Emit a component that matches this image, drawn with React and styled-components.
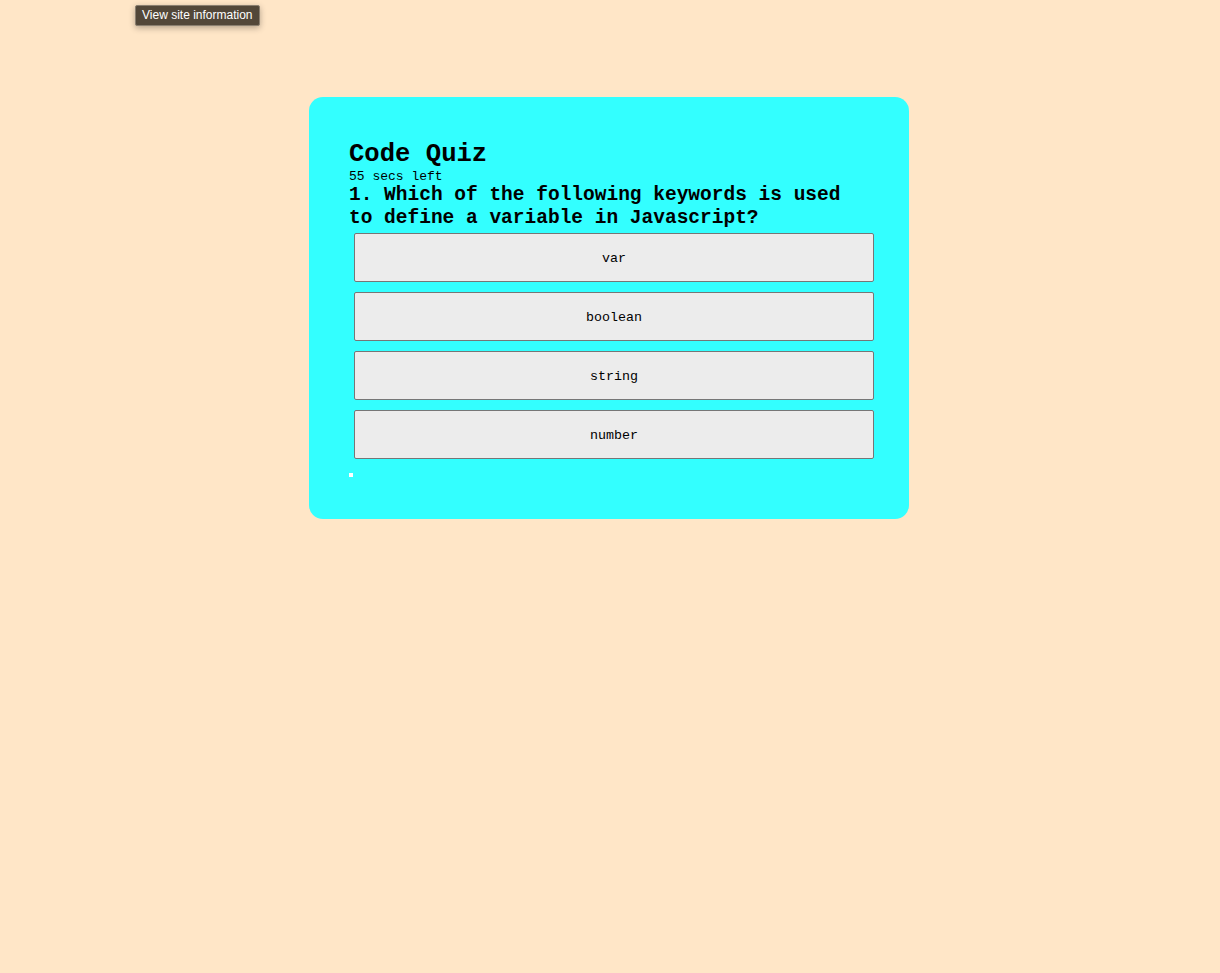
import React from 'react';
import styled, { createGlobalStyle } from 'styled-components';

const GlobalStyle = createGlobalStyle`
  html, body {
    margin: 0;
    padding: 0;
    background: #ffe6c7;
    min-height: 100%;
  }
  body {
    font-family: "Liberation Mono", "Courier New", monospace;
  }
`;

const Page = styled.div`
  min-height: 973px;
  padding-top: 97px;
  box-sizing: border-box;
`;

const SiteTip = styled.div`
  position: absolute;
  top: 5px;
  left: 135px;
  padding: 2px 6px 3px;
  background: #524739;
  border: 1px solid #8a7f70;
  border-radius: 2px;
  color: #fff;
  font-family: "Liberation Sans", Arial, sans-serif;
  font-size: 12px;
  line-height: 14px;
  box-shadow: 0 2px 6px rgba(0, 0, 0, 0.3);
`;

const QuizCard = styled.section`
  width: 600px;
  margin: 0 auto;
  transform: translateX(-1px);
  box-sizing: border-box;
  padding: 43px 40px 42px;
  background: #33ffff;
  border-radius: 14px;
  color: #000;
`;

const Title = styled.h1`
  margin: 0;
  font-size: 25.6px;
  line-height: 29px;
  font-weight: 700;
`;

const Timer = styled.div`
  font-size: 13px;
  line-height: 15px;
`;

const Question = styled.h2`
  margin: 0;
  font-size: 19.5px;
  line-height: 23px;
  font-weight: 700;
`;

const Choices = styled.div`
  display: flex;
  flex-direction: column;
  gap: 10px;
  width: 520px;
  margin: 3px 0 0 5px;
`;

const Choice = styled.button`
  height: 49px;
  width: 100%;
  padding: 2px 6px 0;
  background: #ececec;
  border: 1px solid #767676;
  border-radius: 2px;
  font-family: "Liberation Mono", "Courier New", monospace;
  font-size: 13.33px;
  color: #000;
  cursor: pointer;
`;

const Feedback = styled.div`
  width: 4px;
  height: 4px;
  margin-top: 14px;
  background: #fff;
`;

const choices = ['var', 'boolean', 'string', 'number'];

const App = () => (
  <Page>
    <GlobalStyle />
    <SiteTip>View site information</SiteTip>
    <QuizCard>
      <Title>Code Quiz</Title>
      <Timer>55 secs left</Timer>
      <Question>1. Which of the following keywords is used to define a variable in Javascript?</Question>
      <Choices>
        {choices.map((c) => (
          <Choice key={c}>{c}</Choice>
        ))}
      </Choices>
      <Feedback />
    </QuizCard>
  </Page>
);

export default App;
